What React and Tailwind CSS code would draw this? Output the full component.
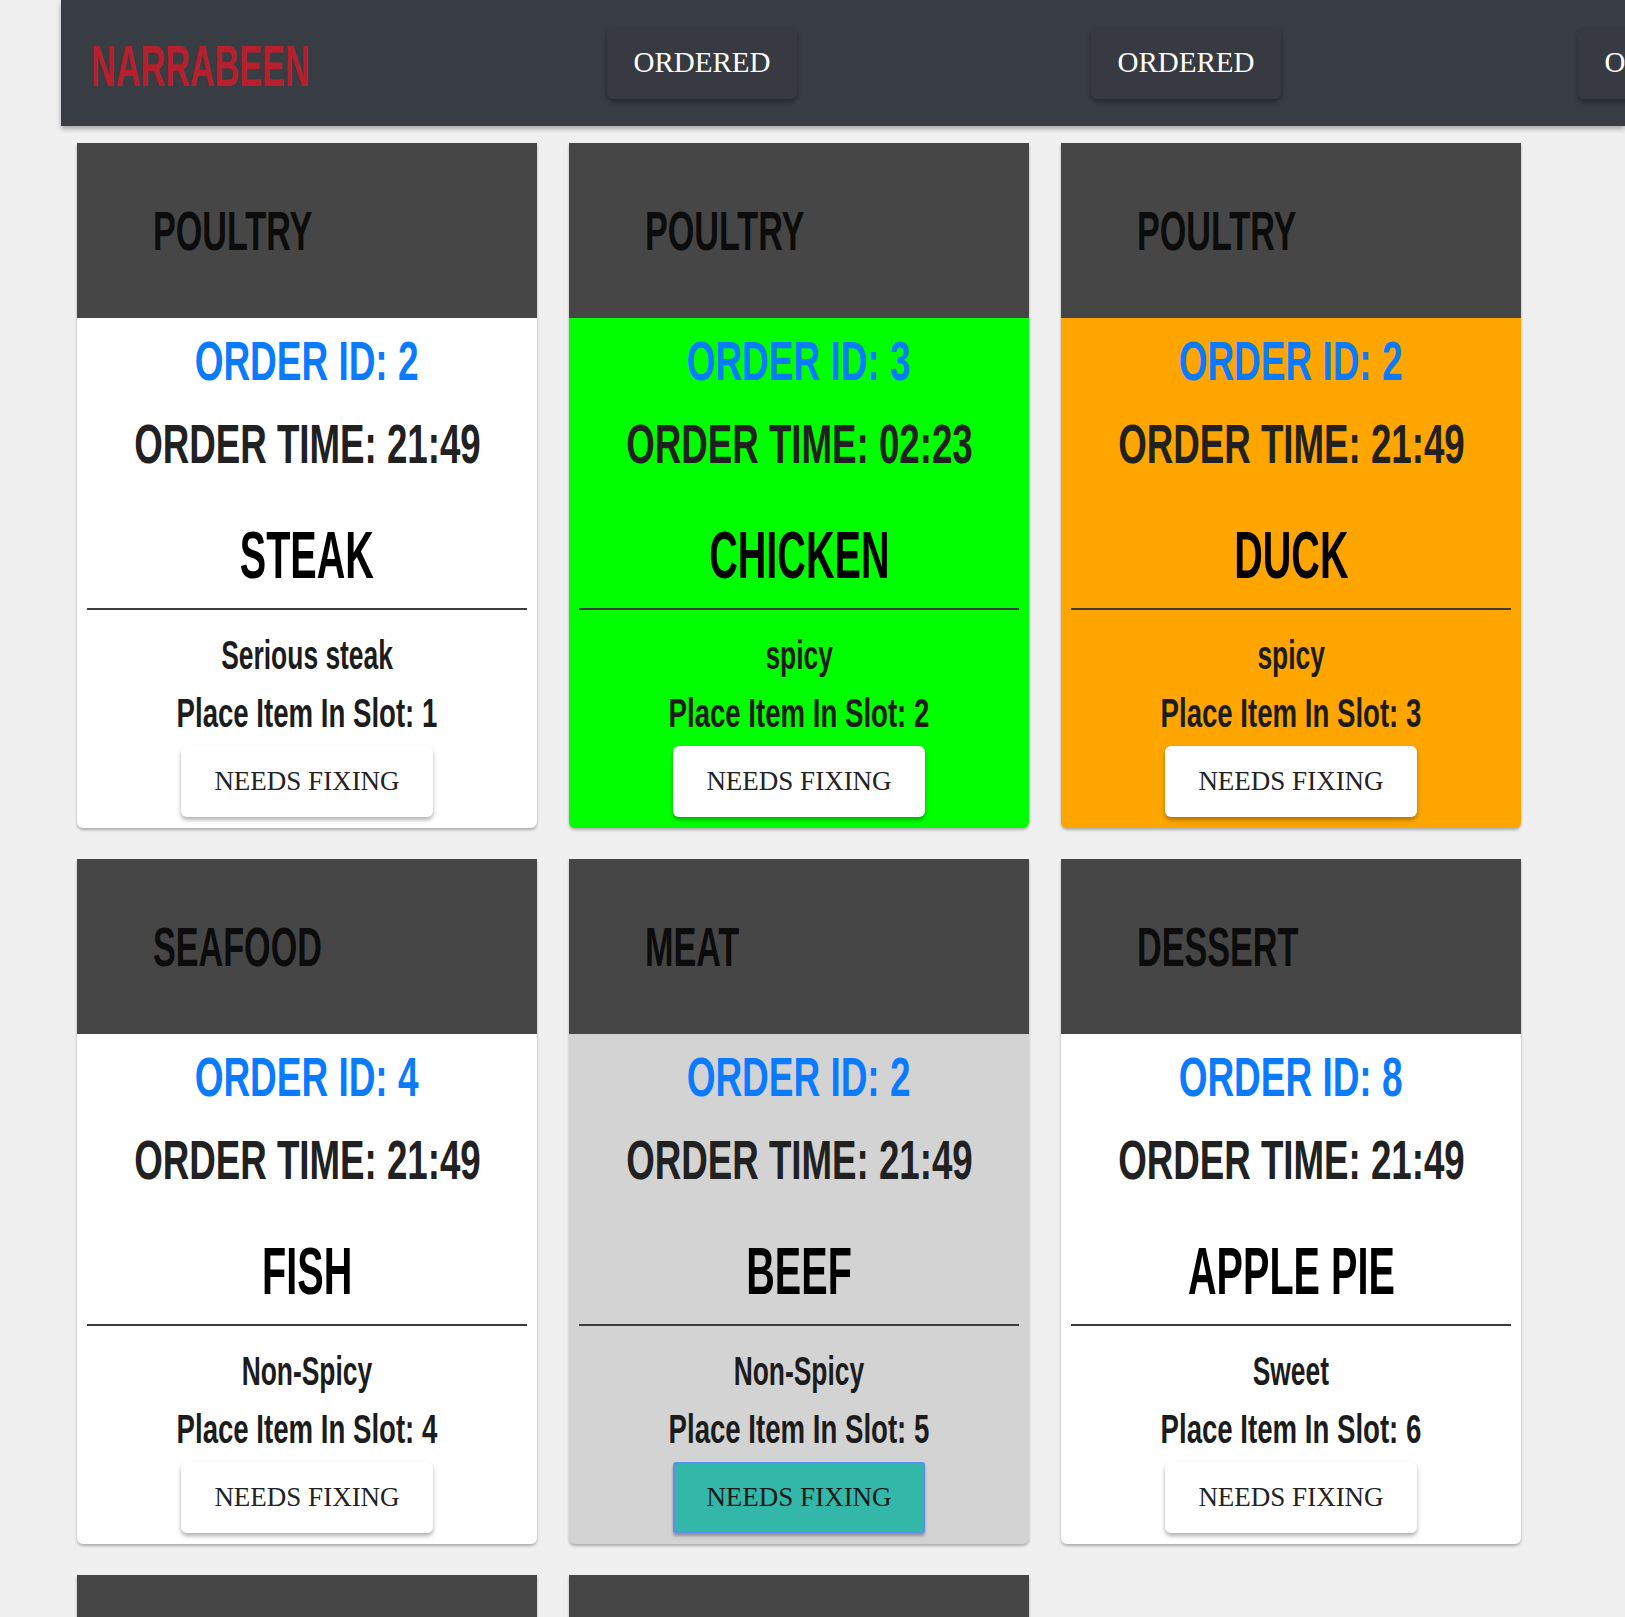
import React from "react";

const cards = [
  { cat: "POULTRY", id: 2, time: "21:49", item: "STEAK", desc: "Serious steak", slot: 1, bg: "bg-white", active: false },
  { cat: "POULTRY", id: 3, time: "02:23", item: "CHICKEN", desc: "spicy", slot: 2, bg: "bg-[#00ff00]", active: false },
  { cat: "POULTRY", id: 2, time: "21:49", item: "DUCK", desc: "spicy", slot: 3, bg: "bg-[#ffa500]", active: false },
  { cat: "SEAFOOD", id: 4, time: "21:49", item: "FISH", desc: "Non-Spicy", slot: 4, bg: "bg-white", active: false },
  { cat: "MEAT", id: 2, time: "21:49", item: "BEEF", desc: "Non-Spicy", slot: 5, bg: "bg-[#d3d3d3]", active: true },
  { cat: "DESSERT", id: 8, time: "21:49", item: "APPLE PIE", desc: "Sweet", slot: 6, bg: "bg-white", active: false },
  { cat: "SEAFOOD", id: 9, time: "21:49", item: "PRAWNS", desc: "Non-Spicy", slot: 7, bg: "bg-white", active: false },
  { cat: "MEAT", id: 10, time: "21:49", item: "LAMB", desc: "spicy", slot: 8, bg: "bg-white", active: false },
];

const cond = "font-['Liberation_Sans',Arial,sans-serif] font-bold leading-none inline-block whitespace-nowrap";

function Card({ c }) {
  return (
    <div className={`w-[460px] h-[685px] rounded-b-[6px] overflow-hidden shadow-[0_2px_3px_rgba(0,0,0,0.28)] flex flex-col ${c.bg}`}>
      <div className="h-[175px] shrink-0 bg-[#464646] flex items-center pl-[76px]">
        <span className={`${cond} origin-left scale-x-[0.61] text-[56px] text-[#0c0c0c]`}>{c.cat}</span>
      </div>
      <div className="h-[86px] shrink-0 flex items-center justify-center">
        <span className={`${cond} scale-x-[0.66] text-[56px] text-[#0a7bff]`}>ORDER ID: {c.id}</span>
      </div>
      <div className="h-[80px] shrink-0 flex items-center justify-center">
        <span className={`${cond} scale-x-[0.655] text-[56px] text-[#212121]`}>ORDER TIME: {c.time}</span>
      </div>
      <div className="h-[124px] shrink-0 pt-[18px] flex items-center justify-center">
        <span className={`${cond} scale-x-[0.6] text-[66px] text-black`}>{c.item}</span>
      </div>
      <div className="h-[2px] shrink-0 mx-[10px] bg-[#3c3c3c]" />
      <div className="pt-[16px] h-[74px] shrink-0 flex items-center justify-center">
        <span className={`${cond} scale-x-[0.66] text-[40px] text-[#1c1c1c]`}>{c.desc}</span>
      </div>
      <div className="h-[58px] shrink-0 flex items-center justify-center">
        <span className={`${cond} scale-x-[0.69] text-[40px] text-[#1c1c1c]`}>Place Item In Slot: {c.slot}</span>
      </div>
      <div className="mt-[4px] flex justify-center">
        {c.active ? (
          <div className="w-[252px] h-[71px] rounded-[3px] border-2 border-[#5b8ef0] bg-[#32b7a8] shadow-[0_3px_3px_rgba(0,0,0,0.3)] flex items-center justify-center font-['Liberation_Serif',serif] text-[27px] text-[#1a1a1a] uppercase">
            Needs Fixing
          </div>
        ) : (
          <div className="w-[252px] h-[71px] rounded-[6px] bg-white shadow-[0_3px_4px_rgba(0,0,0,0.3)] flex items-center justify-center font-['Liberation_Serif',serif] text-[27px] text-[#222] uppercase">
            Needs Fixing
          </div>
        )}
      </div>
    </div>
  );
}

function HeaderButton() {
  return (
    <div className="w-[190px] h-[71px] shrink-0 rounded-[6px] bg-[#373a40] shadow-[0_3px_4px_rgba(0,0,0,0.35)] flex items-center justify-center font-['Liberation_Serif',serif] text-[29px] text-white">
      ORDERED
    </div>
  );
}

export default function App() {
  return (
    <div className="w-full h-screen overflow-hidden bg-[#f0f0f0]">
      <div className="relative z-10 ml-[61px] h-[126px] bg-[#383c43] shadow-[0_3px_5px_rgba(0,0,0,0.3)] flex items-center pl-[30px]">
        <div className="w-[516px] shrink-0 pt-[6px]">
          <span className={`${cond} origin-left scale-x-[0.59] text-[58px] text-[#b81f2d]`}>NARRABEEN</span>
        </div>
        <HeaderButton />
        <div className="w-[294px] shrink-0" />
        <HeaderButton />
        <div className="w-[297px] shrink-0" />
        <HeaderButton />
      </div>
      <div className="ml-[77px] mt-[17px] grid grid-cols-[repeat(3,460px)] gap-x-[32px] gap-y-[31px]">
        {cards.map((c, i) => (
          <Card key={i} c={c} />
        ))}
      </div>
    </div>
  );
}
